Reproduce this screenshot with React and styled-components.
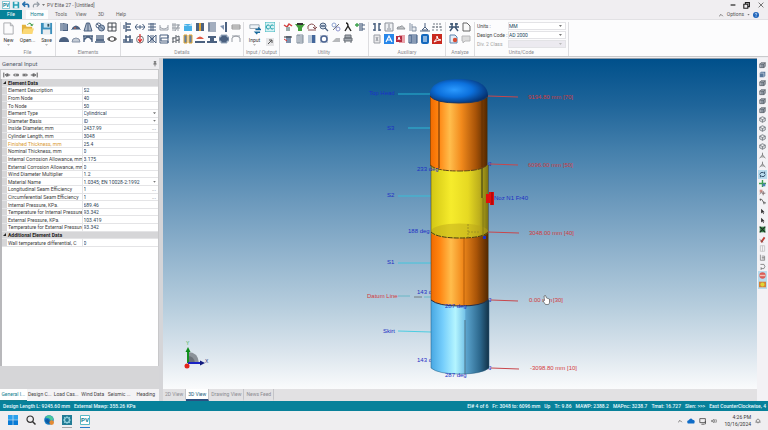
import React from "react";
import styled, { createGlobalStyle, css } from "styled-components";

const GlobalStyle = createGlobalStyle`
  * {
    box-sizing: border-box;
  }
  body {
    margin: 0;
    font-family: Roboto, "Liberation Sans", sans-serif;
    font-size: 5px;
    line-height: 7px;
    color: #333;
    background: #f0eef1;
  }
  button, input, select {
    font: inherit;
    color: inherit;
    margin: 0;
    padding: 0;
    border: 0;
    border-radius: 0;
    background: none;
  }
`;

const Page = styled.div`
  display: flex;
  flex-direction: column;
  min-height: 100vh;
`;
const TitleBar = styled.header`
  display: flex;
  align-items: center;
  gap: 2px;
  height: 10px;
  padding: 0 3px 0 2px;
  color: #555;
`;
const Title = styled.h1`
  margin: 0;
  font-size: 5px;
  font-weight: 400;
`;
const Spacer = styled.div`
  flex: 1;
`;
const WindowButtons = styled.div`
  display: flex;
  gap: 6px;
`;
const IconButton = styled.button`
  display: flex;
  align-items: center;
  justify-content: center;
  width: ${({ $size }) => $size || 8}px;
  height: ${({ $size }) => $size || 8}px;
  color: #333;
  svg {
    display: block;
    width: 100%;
    height: 100%;
  }
`;
const RibbonTabs = styled.nav`
  display: flex;
  align-items: center;
  height: 9px;
`;
const RibbonTab = styled.button`
  height: 9px;
  width: ${({ $kind }) => ($kind ? 22 : 20)}px;
  color: #666;
  ${({ $kind }) =>
    $kind === "file" &&
    css`
      margin-right: 4px;
      color: #fff;
      background: #078299;
    `}
  ${({ $kind }) =>
    $kind === "active" &&
    css`
      margin-right: 3px;
      color: #14808f;
      background: #fdfdfe;
    `}
`;
const Options = styled.div`
  display: flex;
  align-items: center;
  gap: 3px;
  padding-right: 9px;
  color: #555;
`;
const Ribbon = styled.section`
  display: flex;
  height: 38px;
  padding-top: 2px;
  background: #fcfcfd;
  border-top: 1px solid #e2e1e4;
  border-bottom: 1px solid #c9cacc;
`;
const Group = styled.div`
  display: flex;
  flex-direction: column;
  justify-content: space-between;
  padding: 0 ${({ $pad }) => $pad ?? 2}px;
  border-right: 1px solid #dddde0;
`;
const GroupLabel = styled.div`
  text-align: center;
  white-space: nowrap;
  color: #8a8a8e;
`;
const GroupBody = styled.div`
  display: flex;
  gap: 2px;
`;
const IconGrid = styled.div`
  display: grid;
  grid-template-columns: repeat(${({ $cols }) => $cols}, 10px);
  gap: 2px;
`;
const BigButton = styled.button`
  display: flex;
  flex-direction: column;
  align-items: center;
  width: 17px;
  height: 27px;
  svg {
    display: block;
    width: 13px;
    height: 13px;
    flex: none;
  }
  svg + span {
    margin-top: 2px;
  }
`;
const Caret = styled.span`
  width: 3px;
  height: 2px;
  flex: none;
  background: ${({ $light }) => ($light ? "#bbb" : "#777")};
  clip-path: polygon(0 0, 100% 0, 50% 100%);
`;
const CodeGrid = styled.div`
  display: grid;
  grid-template-columns: 31px 58px;
  row-gap: 1px;
  color: #444;
`;
const CodeLabel = styled.label`
  line-height: 8px;
  white-space: nowrap;
  opacity: ${({ $off }) => ($off ? 0.5 : 1)};
`;
const SelectBox = styled.div`
  display: flex;
  align-items: center;
  height: 8px;
  padding-right: 3px;
  background: ${({ $off }) => ($off ? "#eceaf0" : "#fff")};
  border: 1px solid #e3e3e6;
  select {
    flex: 1;
    min-width: 0;
    height: 6px;
    line-height: 6px;
    appearance: none;
    color: #17455c;
    opacity: 1;
  }
`;

const Workspace = styled.main`
  display: flex;
  flex: 1;
  min-height: 0;
  padding-top: 1px;
  background: #eeedf0;
`;
const Side = styled.aside`
  display: flex;
  flex-direction: column;
  width: 163px;
  flex: none;
  border-right: 4px solid #d5d5d8;
`;
const SideHead = styled.div`
  display: flex;
  align-items: center;
  justify-content: space-between;
  height: 11px;
  padding: 0 1px 0 2px;
`;
const SideTitle = styled.h2`
  margin: 0;
  font-size: 6px;
  font-weight: 400;
  color: #55606c;
`;
const SideTools = styled.div`
  display: flex;
  gap: 1px;
  height: 10px;
  padding: 1px 2px;
  border: 1px solid #c8c8ca;
  border-bottom: 0;
  background: #f7f6f8;
`;
const Sheet = styled.div`
  flex: 1;
  background: #fff;
  border-left: 2px solid #b8b8bb;
  border-right: 1px solid #c8c8ca;
`;
const Props = styled.table`
  width: 100%;
  height: 168px;
  table-layout: fixed;
  border-collapse: collapse;
  background: #fff;
  th, td {
    padding: 0;
    height: 7px;
    font-weight: 400;
    text-align: left;
    white-space: nowrap;
    overflow: hidden;
    line-height: 6px;
    border-bottom: 1px solid #e4e4e6;
  }
`;
const Gutter = styled.td`
  background: #d6d6d8;
`;
const SectionHead = styled.th`
  && {
    padding-left: 1px;
    font-weight: 700;
    background: #d6d6d8;
    color: #222;
  }
`;
const PropLabel = styled.th`
  color: ${({ $hot }) => ($hot ? "#d99a33" : "#3c3c3c")};
  && {
    padding-left: 1px;
    border-right: 1px solid #e4e4e6;
  }
`;
const PropValue = styled.div`
  display: flex;
  align-items: center;
  height: 6px;
  padding: 0 2px 0 1px;
  color: #2d4254;
  input, select {
    flex: 1;
    min-width: 0;
    height: 6px;
    line-height: 6px;
    appearance: none;
  }
`;
const Help = styled.div`
  height: 23px;
  background: #d6d6d8;
`;
const TabStrip = styled.div`
  display: flex;
  height: 12px;
  background: ${({ $grey }) => ($grey ? "#e2e1e3" : "#f4f3f5")};
`;
const PanelTab = styled.button`
  flex: 1;
  min-width: 0;
  white-space: nowrap;
  color: ${({ $active }) => ($active ? "#14808f" : "#444")};
  border-bottom: 1px solid ${({ $active }) => ($active ? "#14808f" : "transparent")};
  background: ${({ $active }) => ($active ? "#fff" : "transparent")};
`;
const ViewTab = styled.button`
  padding: 0 2px;
  white-space: nowrap;
  color: ${({ $active }) => ($active ? "#17607a" : "#8b8b90")};
  border-right: 1px solid #c4c4c8;
  border-bottom: 2px solid ${({ $active }) => ($active ? "#2c4f80" : "transparent")};
  background: ${({ $active }) => ($active ? "#fff" : "transparent")};
`;
const Stage = styled.section`
  display: flex;
  flex-direction: column;
  flex: 1;
  min-width: 0;
`;
const Viewport = styled.div`
  display: flex;
  flex: 1;
  min-height: 0;
  border-top: 1px solid #8c9aa8;
  background: linear-gradient(
    #00508b 0%,
    #1f659a 14%,
    #4580ac 28%,
    #6b99bc 43%,
    #91b3cd 59%,
    #b6cddd 75%,
    #dbe5ed 89%,
    #fafbfc 100%
  );
  svg {
    display: block;
    width: 100%;
    height: 100%;
    font-family: "Liberation Sans", Arial, sans-serif;
  }
`;
const ViewTools = styled.div`
  display: flex;
  flex-direction: column;
  align-items: center;
  width: 11px;
  flex: none;
  padding-top: 3px;
  background: #f3f2f5;
`;
const ViewTool = styled.button`
  width: 9px;
  height: 9px;
  flex: none;
  padding: 1px;
  background: ${({ $on }) => ($on ? "#b9dcee" : "transparent")};
  svg {
    display: block;
    width: 7px;
    height: 7px;
  }
`;
const ToolGap = styled.div`
  height: 1px;
  flex: none;
`;
const StatusBar = styled.footer`
  display: flex;
  align-items: center;
  gap: 4px;
  height: 10px;
  padding: 0 2px 0 3px;
  font-weight: 500;
  color: #e8fbff;
  background: #07819a;
  white-space: nowrap;
`;
const Taskbar = styled.nav`
  display: flex;
  align-items: center;
  gap: 8px;
  height: 19px;
  padding: 0 7px 0 8px;
  background: #efeef0;
`;
const TaskButton = styled.button`
  width: 10px;
  height: 14px;
  padding: 1px 0;
  border-bottom: 1px solid ${({ $mark }) => $mark || "transparent"};
  svg {
    display: block;
    width: 10px;
    height: 10px;
  }
`;
const Tray = styled.div`
  display: flex;
  align-items: center;
  gap: 4px;
`;
const Clock = styled.div`
  padding-left: 3px;
  text-align: right;
  color: #333;
`;

const S = "#4b6180";
const G = "#70757c";

const icons = {
  shell: <><path d="M1 1h3v8H1z" fill="#8c9bb0" /><path d="M4 1l5 1v7H4z" fill={S} /><path d="M5 2v6M7 2v6" stroke="#b9c6d8" /></>,
  head: <><path d="M1 7V6q4-5 8 0v1z" fill={S} /><path d="M3 6h2" stroke="#d86b4a" /><path d="M0 7.500h10" stroke="#9aa8ba" /></>,
  cone: <><path d="M3.500 1h3L9 9H1z" fill="#aab7c9" stroke={S} /><path d="M5 1v8" stroke={S} /></>,
  bend: <><circle cx="3.500" cy="3.500" r="2.500" fill="none" stroke={S} /><circle cx="6.500" cy="6" r="3" fill="#9fb0c6" stroke={S} /><path d="M2 2l7 6" stroke={S} /></>,
  flange: <path d="M1 1h8v8H1zM5 1v8M1 5h8" fill="none" stroke="#454a52" />,
  dome: <path d="M0 7q1-4 5-4t5 4v1H0z" fill={S} />,
  domeLt: <path d="M1 8q0-4 4-4t4 4z" fill="#c5ccd6" stroke="#8592a6" />,
  arch: <path d="M0 2h10M1 8V2M9 8V2M1 6q4-6 8 0" fill="none" stroke={S} strokeWidth="1.400" />,
  skirt: <path d="M2 1v6M4 1v6M6 1v6M8 1v6M0 8h10M1 6h8" stroke={S} strokeWidth="1.300" />,
  body: <><ellipse cx="5" cy="5" rx="3" ry="2.300" fill="none" stroke="#444" /><path d="M0 5h2M8 5h2M2 3v4M8 3v4" stroke="#444" /></>,
  nozzle: <path d="M3 0v10M3 2h5M3 5h4M3 8h5M1 3v4" stroke={S} strokeWidth="1.300" fill="none" />,
  width: <path d="M0 5h10M2.500 2L0 5l2.500 3M7.500 2L10 5 7.500 8M5 3v4" stroke={S} fill="none" />,
  beam: <path d="M1 2h8M1 5h8M1 8h8M4 1v8M6 1v8" stroke={S} />,
  saddle: <path d="M1 3v5h8V3M1 5q4 4 8 0" stroke="#999fa8" fill="none" />,
  tower: <path d="M2 1v8M4 1v8M7 2v7M1 3h8M1 6h8M4 9l4-6" stroke="#9aa0a8" />,
  liquid: <><path d="M1 2h8v7H1z" fill="#45b0e8" /><path d="M1 2l4 2 4-3v3H1z" fill="#b7dff5" /></>,
  insul: <><path d="M1 1h3v8H1zM6 1h3v8H6z" fill={S} /><path d="M4 1h2v8H4z" fill="#e3a52e" /></>,
  trays: <path d="M1 1h8M1 3h8M1 5h8M1 7h8M1 9h8M2 1v8" stroke={S} />,
  lug: <><path d="M6 0h2v10H6z" fill={S} /><path d="M5 3v5L1 4z" fill="#8094b2" /></>,
  lining: <path d="M1 3h8v4H1zM1 5h8" fill="#ddd" stroke="#999" />,
  legs: <path d="M0 8h10M2 3h6M3 1v7M7 1v7M0 6h4M6 6h4" stroke={S} strokeWidth="1.300" />,
  force: <><circle cx="5" cy="5.500" r="3.500" fill="none" stroke="#777" /><path d="M5 0v7M3 5l2 3 2-3" stroke="#d33" fill="none" strokeWidth="1.200" /></>,
  tubes: <path d="M1 1v8M9 1v8M1 1l4 4-4 4M9 1L5 5l4 4M4 1v8M6 1v8" stroke={S} fill="none" />,
  coil: <path d="M1 1h8v3H2v3h7v2H1M9 1v8M1 1v8" stroke={S} fill="none" />,
  lift: <path d="M2 9V3M5 9V1M8 9V2M1 5l7-3M1 8l8-3" stroke={G} strokeWidth="1.200" />,
  jacket: <path d="M1 1h3v8H1zM6 1h3v8H6z" fill="#5f7fa8" stroke="#e0a530" />,
  cap: <><path d="M1 5q4-5 8 0z" fill="#e05a45" /><path d="M0 7h10v2H0z" fill={S} /></>,
  cap2: <path d="M1 2h8v2H1zM3 4h4v3H3zM0 7h10v2H0z" fill={S} />,
  exp: <path d="M2 1h6v2h2v4H8v2H2V7H0V3h2z" fill={S} stroke="#9aabbf" />,
  curve: <path d="M1 8V4q4-4 8 0v4M1 2h8" stroke="#979ca4" fill="none" />,
  cc: <><path d="M0 0h10v10H0z" fill="#d5f1f3" stroke="#3db5be" /><path d="M4.500 3.500a2 2 0 100 3M8.500 3.500a2 2 0 100 3" fill="none" stroke="#179ba8" /></>,
  exportI: <><path d="M1 1h8v8H1z" fill="#e6e6e8" /><path d="M3 7l4-4M4 3h3v3" stroke="#555" fill="none" /></>,
  tee: <><path d="M1 3l3 2 2-3 3 2" stroke="#d43e3e" fill="none" strokeWidth="1.500" /><path d="M3 5h4v4H3z" fill="#99aaaa" /></>,
  funnel: <><path d="M0 2h10L7 6v3H3V6z" fill="#44a03d" /><path d="M2 1h6v2H2z" fill="#333" /></>,
  recycle: <path d="M1 7V4q4-4 7 0v2M1 8h8M6 5l2 2 2-2" stroke="#885052" fill="none" />,
  search: <><circle cx="4" cy="4" r="3" fill="#d4dfed" stroke={S} /><path d="M6 6l3 3M2 4h4" stroke={S} strokeWidth="1.300" /></>,
  nodes: <><circle cx="3" cy="3" r="2" fill="none" stroke="#8fa3d0" /><circle cx="7" cy="7" r="2" fill="none" stroke="#8f95d0" /><path d="M2 8l6-6" stroke="#777" /></>,
  lambda: <path d="M3 1q2 0 2 3l3 5M5 4L2 9" stroke="#222" fill="none" strokeWidth="1.400" />,
  addNoz: <><path d="M5 1v8M7 1v8M7 3h3M7 7h3" stroke={S} strokeWidth="1.200" /><path d="M0 3h4M2 1v4" stroke="#3aa04b" strokeWidth="1.300" /></>,
  del: <><path d="M3 2h5v7H3z" fill="#7c91ad" /><path d="M1 3h8" stroke="#333" /><path d="M1 5l3 2" stroke="#d33" /></>,
  ruler: <path d="M2 1h6v8H2zM4 1v8M5 3h3M5 5h3M5 7h3" fill="#e7ebf0" stroke="#7f8b99" />,
  panel: <><path d="M1 1h8v8H1z" fill="#bcc9d8" /><path d="M5 1h3v8H5z" fill="#44679b" /></>,
  ring: <><path d="M1 1h8v8H1z" fill="#c7cfda" /><circle cx="5" cy="5" r="3" fill="#fff" stroke="#4d6593" strokeWidth="1.500" /></>,
  slope: <path d="M1 8l4-4h4v4z" fill="#b7b9bc" />,
  printer: <path d="M2 1h6v3H2zM1 4h8v3H1zM2 7v2M8 7v2" fill="#a6abb2" stroke="#686e76" />,
  bars: <path d="M3 1v8M7 1v8M1 2h2M1 8h2M7 2h2M7 8h2" stroke={S} strokeWidth="1.500" />,
  pic: <path d="M1 1h8v8H1zM5 2v4M3 7h4" fill="#eef0f3" stroke="#8b9099" />,
  cloud: <path d="M1 7q0-3 3-2 2-3 5 2z" fill="#bfc2c6" stroke="#909499" />,
  hand: <path d="M2 1v8M4 5h4v4H4zM4 5V2" fill="#e8ebef" stroke="#8290a3" />,
  tri: <path d="M5 1v4L2 8h6L5 5M0 9h10" stroke={S} fill="none" />,
  grid: <path d="M1 2h8M1 9V4M5 9V3M9 9V4M1 5h8" stroke="#6e7680" strokeDasharray="2 1" />,
  page: <path d="M2 1h6v8H2zM4 3l2 4M4 7l2-4" fill="#e9e9eb" stroke="#9a9ea5" />,
  blueA: <><path d="M0 0h10v10H0z" fill="#2787ea" /><path d="M2 8l3-6 3 6M3.500 6h3" stroke="#fff" fill="none" strokeWidth="1.200" /></>,
  access: <><path d="M3 1h6v8H3z" fill="#e7a2aa" /><path d="M0 2h6v6H0z" fill="#b52a40" /><path d="M2 6l1-3 1 3" stroke="#fff" fill="none" /></>,
  sheet: <path d="M1 1h8v8H1zM3 3h6M3 5h6M3 7h6M3 1v8" fill="#dbe3ef" stroke="#34527c" />,
  book: <><rect x="1" y="0" width="8" height="10" rx="2" fill="#1468bd" /><path d="M3 3h4M3 5h4M3 7h4" stroke="#fff" /></>,
  pdf: <><path d="M0 0h10v10H0z" fill="#c9291f" /><path d="M2 8q4-4 3-6 0 4 4 4-4 0-7 2" stroke="#fff" fill="none" /></>,
  run: <><path d="M0 5h10M1 9l3-4M9 9L6 5M3 1v4M7 1v4M1 2h3M6 2h3" stroke="#3b5472" strokeWidth="1.400" /></>,
  doc: <path d="M2 1h4l3 3v5H2z" fill="#fafafa" stroke="#666" />,
  report: <><path d="M1 1h5l2 2v6H1z" fill="#e5edf6" stroke="#5c83ad" /><circle cx="6" cy="6" r="2.200" fill="#d94b32" /></>,
  note: <path d="M1 2h8v5H4L2 9V7H1z" fill="#ddd" stroke="#b8b8ba" />,
  cube: <><path d="M2 2h6v6H2z" fill="#8a939e" /><path d="M1 3l2-2h6v5L7 8H1zM1 3h6v5M7 3l2-2" fill="none" stroke="#4e565f" /></>,
  cubeBlue: <><path d="M1 3l2-2h6v6L7 9H1z" fill="#57779a" /><path d="M1 3h6v6" stroke="#cfd8e3" fill="none" /></>,
  iso: <path d="M5 1l4 2v4L5 9 1 7V3zM1 3l4 2 4-2M5 5v4" fill="#d3d6da" stroke="#6a7077" />,
  person: <path d="M5 1v4M5 4L1 9M5 4l4 5M3 7h4" fill="none" stroke="#777" strokeWidth="1.200" />,
  orbit: <path d="M1 5q1-4 5-3l2 2V1M9 5q-1 4-5 3L2 6v3" fill="none" stroke="#36536e" strokeWidth="1.400" />,
  pan: <><path d="M5 0v10M0 5h10" stroke="#3ca24b" strokeWidth="2" /><path d="M5 5h4v4H5z" fill="#4a80b8" /></>,
  zoomWin: <><path d="M1 1h4v4H1z" fill="#cd8f88" /><path d="M4 6h5M6 3v6M1 7l3-3" stroke="#77696a" strokeWidth="1.300" /></>,
  spline: <path d="M1 2h3l3 5h3M2 1v3M7 5v4" fill="none" stroke="#555" strokeWidth="1.200" />,
  pointer: <path d="M3 1v7l2-2 1 3 1-1-1-2h2z" fill="#333" />,
  fit: <><path d="M1 1h8v8H1z" fill="#3d8e50" /><path d="M1 1l8 8M9 1L1 9" stroke="#1c2e22" strokeWidth="1.500" /></>,
  clip: <><path d="M2 8l5-7 2 2-5 7z" fill="#c34238" /><path d="M1 5l5 4" stroke="#555" /></>,
  faint: <path d="M2 1h6v8H2zM5 1v8" fill="none" stroke="#bbb" />,
  lines: <path d="M2 1v8h6V3H4M4 5h4M4 7h4" fill="none" stroke="#777" />,
  hook: <path d="M2 2h5q3 3 0 6H3M3 6v4" fill="none" stroke="#666" />,
  redStop: <><circle cx="5" cy="5" r="4.500" fill="#da5d57" /><path d="M1 5h8" stroke="#f2c3b6" strokeWidth="2" /></>,
  sun: <><path d="M0 1h10v8H0z" fill="#d68237" /><circle cx="5" cy="5" r="3" fill="#dfd535" /></>,
  first: <path d="M1 2v6M3 5h6M5 3L3 5l2 2M6 3v4" stroke="#333" fill="none" />,
  prev: <path d="M2 5h6M4 3L2 5l2 2M5 4h3v2H5" stroke="#555" fill="none" />,
  next: <path d="M2 5h6M6 3l2 2-2 2M2 4h3v2H2" stroke="#555" fill="none" />,
  last: <path d="M9 2v6M1 5h6M5 3l2 2-2 2M4 3v4" stroke="#333" fill="none" />,
  pin: <path d="M3 1h4M4 1v4M6 1v4M2 5h6M5 5v4" stroke="#444" fill="none" />,
  undo: <path d="M1 4h6q2 1 1 4M4 1L1 4l3 3" stroke="#2871ad" fill="none" strokeWidth="2" />,
  redo: <path d="M9 4H3q-2 1-1 4M6 1l3 3-3 3" stroke="#929aa3" fill="none" strokeWidth="1.500" />,
  save: <><path d="M1 1h7l1 1v7H1z" fill="#279fb5" /><path d="M3 1h4v3H3zM3 6h4v3H3z" fill="#dff3f7" /></>,
  min: <path d="M2 5h6" stroke="#222" strokeWidth="1.500" />,
  restore: <path d="M1 4h5v5H1zM3 4V2h5v5H6" fill="none" stroke="#222" strokeWidth="1.400" />,
  close: <path d="M2 2l6 6M8 2L2 8" stroke="#555" />,
  up: <path d="M2 7l3-3 3 3" stroke="#555" fill="none" strokeWidth="1.300" />,
  win: <><path d="M0 0h4.700v4.700H0zM5.300 0H10v4.700H5.300z" fill="#2ba0ed" /><path d="M0 5.300h4.700V10H0zM5.300 5.300H10V10H5.300z" fill="#087bd5" /></>,
  find: <><circle cx="4.200" cy="4.200" r="3.200" fill="none" stroke="#333" strokeWidth="1.200" /><path d="M6.500 6.500L9.500 9.500" stroke="#333" strokeWidth="1.500" /></>,
  edge: <><circle cx="5" cy="5" r="4.800" fill="#1680c7" /><path d="M1 3q3-5 8-.5Q10 5 7 6q-2-4-6-3" fill="#4bc99b" /><path d="M1 6q3 4 6 2L4 4Q1 4 1 6" fill="#0b5ba5" /><circle cx="7.700" cy="7.600" r="2.300" fill="#e58b34" /></>,
  gear: <><path d="M0 0h10v10H0z" fill="#237c95" /><circle cx="5" cy="5" r="2.500" fill="none" stroke="#a2dae5" strokeWidth="1.200" /><path d="M5 1v2M5 7v2M1 5h2M7 5h2M2 2l1 1M8 2L7 3M2 8l1-1M8 8L7 7" stroke="#86cbd9" /></>,
  pv: <><path d="M.5.5h9v9h-9z" fill="#fff" stroke="#5bb9c6" /><text x="5" y="7" fontSize="6" fontWeight="700" textAnchor="middle" fill="#087e94">PV</text></>,
  onedrive: <path d="M1 8q-2-3 1-4 3-4 5-.5 4 .500 2 4.500z" fill="#0f6cc7" />,
  net: <path d="M1 2h7v5H1zM3 9h4M8 5v4" fill="none" stroke="#444" />,
  sound: <path d="M1 4h2l2-2v6L3 6H1zM6 4q1 1 0 2M8 2q2 3 0 6" fill="none" stroke="#444" />,
  bell: <path d="M1 7l1-1V4q3-5 6 0v2l1 1zM4 8h2" fill="none" stroke="#444" />,
};

const Icon = ({ name }) => (
  <svg viewBox="0 0 10 10" aria-hidden="true">
    {icons[name]}
  </svg>
);

const elements = ["shell", "head", "cone", "bend", "flange", "dome", "domeLt", "arch", "skirt", "body"];
const details = [
  "nozzle", "width", "beam", "saddle", "tower", "liquid", "insul", "trays", "lug", "lining",
  "legs", "force", "tubes", "coil", "lift", "jacket", "cap", "cap2", "exp", "curve",
];
const utility = [
  "tee", "funnel", "recycle", "search", "nodes", "lambda", "addNoz",
  "del", "ruler", "panel", "ring", "slope", "printer",
];
const auxiliary = [
  "bars", "pic", "cloud", "hand", "tri", "grid",
  "page", "blueA", "access", "sheet", "book", "pdf",
];
const analyze = ["run", "doc", "report", "note"];

const viewTools = [
  "cube", "cubeBlue", "cube", "cube", "cube", "cube", "iso", "iso", "iso", "iso", "person", "person", "-",
  "orbit", "pan", "zoomWin", "spline", "-",
  "pointer", "pointer", "fit", "-",
  "clip", "faint", "lines", "hook", "redStop", "sun",
];

const elementData = [
  { label: "Element Description", value: "S2" },
  { label: "From Node", value: "40" },
  { label: "To Node", value: "50" },
  { label: "Element Type", value: "Cylindrical", select: true },
  { label: "Diameter Basis", value: "ID", select: true },
  { label: "Inside Diameter, mm", value: "2437.99", more: true },
  { label: "Cylinder Length, mm", value: "3048" },
  { label: "Finished Thickness, mm", value: "25.4", hot: true },
  { label: "Nominal Thickness, mm", value: "0" },
  { label: "Internal Corrosion Allowance, mm", value: "3.175" },
  { label: "External Corrosion Allowance, mm", value: "0" },
  { label: "Wind Diameter Multiplier", value: "1.2" },
  { label: "Material Name", value: "1.0345; EN 10028-2:1992", select: true },
  { label: "Longitudinal Seam Efficiency", value: "1", more: true },
  { label: "Circumferential Seam Efficiency", value: "1", more: true },
  { label: "Internal Pressure, KPa.", value: "689.46" },
  { label: "Temperature for Internal Pressure,", value: "93.342" },
  { label: "External Pressure, KPa.", value: "103.419" },
  { label: "Temperature for External Pressure,", value: "93.342" },
];
const additionalData = [{ label: "Wall temperature differential, C", value: "0" }];

const panelTabs = ["General I...", "Design C...", "Load Cas...", "Wind Data", "Seismic ...", "Heading"];
const viewTabs = ["2D View", "3D View", "Drawing View", "News Feed"];
const status = [
  "El# 4 of 6", "Fr: 3048 to: 6096 mm", "Up", "Tr: 9.86", "MAWP: 2388.2",
  "MAPnc: 3238.7", "Tmat: 16.727", "Slen: >>>", "East CounterClockwise, 4",
];
const taskbar = [
  { name: "win" },
  { name: "find" },
  { name: "edge" },
  { name: "gear", mark: "#a5a5a8" },
  { name: "pv", mark: "#2b7cc9" },
];

function IconGroup({ label, names, cols, pad }) {
  return (
    <Group $pad={pad}>
      <IconGrid $cols={cols}>
        {names.map((name) => (
          <IconButton key={name} $size={10} aria-label={name}>
            <Icon name={name} />
          </IconButton>
        ))}
      </IconGrid>
      <GroupLabel>{label}</GroupLabel>
    </Group>
  );
}

function PropRows({ title, rows }) {
  return (
    <>
      <tr>
        <Gutter>
          <svg width="5" height="5" viewBox="0 0 5 5" display="block">
            <path d="M4 1v3H1z" fill="#222" />
          </svg>
        </Gutter>
        <SectionHead colSpan={2}>{title}</SectionHead>
      </tr>
      {rows.map((row, i) => {
        const id = `${title}-${i}`.replace(/ /g, "-");
        return (
          <tr key={row.label}>
            <Gutter />
            <PropLabel $hot={row.hot}>
              <label htmlFor={id}>{row.label}</label>
            </PropLabel>
            <td>
              <PropValue>
                {row.select ? (
                  <select id={id}>
                    <option>{row.value}</option>
                  </select>
                ) : (
                  <input id={id} defaultValue={row.value} />
                )}
                {row.select && <Caret />}
                {row.more && <span>...</span>}
              </PropValue>
            </td>
          </tr>
        );
      })}
    </>
  );
}

function Vessel() {
  return (
    <svg viewBox="163 60 594 328" fontSize="6">
      <defs>
        <linearGradient id="orange">
          <stop offset="0" stopColor="#f06a00" />
          <stop offset="0.150" stopColor="#ff8410" />
          <stop offset="0.350" stopColor="#ffbd4c" />
          <stop offset="0.550" stopColor="#f28a1c" />
          <stop offset="0.800" stopColor="#a95408" />
          <stop offset="1" stopColor="#542900" />
        </linearGradient>
        <linearGradient id="yellow">
          <stop offset="0" stopColor="#d2c614" />
          <stop offset="0.350" stopColor="#f6ec2c" />
          <stop offset="0.650" stopColor="#e6d922" />
          <stop offset="0.850" stopColor="#bdaf1c" />
          <stop offset="1" stopColor="#7d7413" />
        </linearGradient>
        <linearGradient id="sky">
          <stop offset="0" stopColor="#48a7e2" />
          <stop offset="0.200" stopColor="#74cdfb" />
          <stop offset="0.420" stopColor="#b4f5ff" />
          <stop offset="0.580" stopColor="#78c5e9" />
          <stop offset="0.600" stopColor="#5ca5cf" />
          <stop offset="0.850" stopColor="#2b668b" />
          <stop offset="1" stopColor="#123248" />
        </linearGradient>
        <radialGradient id="cap" cx="0.420" cy="0.450" r="0.620">
          <stop offset="0" stopColor="#2b9aff" />
          <stop offset="0.500" stopColor="#0c70dc" />
          <stop offset="1" stopColor="#052f6c" />
        </radialGradient>
      </defs>

      <g fill="#1d2fc4">
        <text x="369" y="95">Top Head</text>
        <text x="387" y="130">S3</text>
        <text x="387" y="197">S2</text>
        <text x="387" y="264">S1</text>
        <text x="383" y="333">Skirt</text>
        <text x="408" y="233">188 deg</text>
        <text x="417" y="294">143 deg</text>
        <text x="417" y="362">143 deg</text>
        <text x="488" y="165">g</text>
        <text x="488" y="301">g</text>
        <text x="488" y="369">g</text>
      </g>
      <path d="M398 94h33M408 128h23M398 196h33M398 263h33M398 331l33 1" stroke="#2cc9df" strokeWidth="0.800" />
      <path d="M398 296h12M424 297h7" stroke="#59b3c0" strokeWidth="0.800" />
      <path d="M414 297h8" stroke="#666" strokeWidth="0.800" />

      <path d="M431 300v68q7 6 29 6t29-6v-68z" fill="url(#sky)" stroke="#245a7c" strokeWidth="0.500" />
      <path d="M465 320v54" stroke="#4c7083" />
      <path d="M431 232v68q7 6 29 6t28-6v-68z" fill="url(#orange)" />
      <path d="M431 300q7 6 29 6t28-6" fill="none" stroke="#24304a" />
      <path d="M464 238v67" stroke="#a34e00" strokeWidth="0.700" />
      <path d="M431 165v68q6 5 29 5t28-5v-68z" fill="url(#yellow)" />
      <ellipse cx="459.500" cy="231" rx="28.500" ry="7.500" fill="#b8a219" fillOpacity="0.450" />
      <path d="M431 232q6 6 29 6t28-6" fill="none" stroke="#4a3c12" strokeDasharray="5 1" />
      <path d="M468 224v13M468 232h12" stroke="#a09222" strokeDasharray="2 1" />
      <path d="M482 165v33" stroke="#333414" />
      <path d="M483 198v39" stroke="#777016" strokeWidth="0.700" />
      <path d="M430 95v70q6 6 29 6t28-6V95z" fill="url(#orange)" />
      <path d="M430 165q6 6 29 6t28-6" fill="none" stroke="#5e4719" strokeDasharray="6 1" />
      <path d="M439 100v68" stroke="#5a2b05" />
      <path d="M482 99v68" stroke="#5a2b05" strokeWidth="0.700" />
      <path d="M430 96C429 85 440 79 459 79s29 6 29 17q-5 7-29 7t-29-7z" fill="url(#cap)" />
      <path d="M430 96q5 7 29 7t29-7" fill="none" stroke="#1b3864" />
      <path d="M430.500 96v69M487.500 96v69M431 165v135M488.500 165v135" stroke="#443416" strokeWidth="0.500" />

      <path d="M486 194h3v-2h5v13h-4v-2h-4z" fill="#e30d0d" />
      <path d="M492 192v13" stroke="#8e0606" />

      <g fill="#1d2fc4">
        <text x="494" y="200">Noz N1 Fr40</text>
        <text x="417" y="171">233 deg</text>
        <text x="445" y="308">287 deg</text>
        <text x="445" y="377">287 deg</text>
        <path d="M483 236h3v3h-3z" />
      </g>
      <path d="M488 96l30 1M490 164l28 1M488 232l31 1M491 300l27 1M491 368l28 1" stroke="#c8474c" />
      <g fill="#d33a3d">
        <text x="528" y="99">9194.80 mm [70]</text>
        <text x="528" y="167">6096.00 mm [50]</text>
        <text x="529" y="235">3048.00 mm [40]</text>
        <text x="529" y="302">0.00 mm</text>
        <text x="553" y="302">[30]</text>
        <text x="530" y="370">-3098.80 mm [10]</text>
        <text x="367" y="298">Datum Line</text>
      </g>
      <path d="M544 296l1.500-.5 1 2.500 3 1v4l-1 1.500h-3L543 301l1.500-.5z" fill="#fff" stroke="#444" strokeWidth="0.600" />

      <path d="M188 363v-11q10 0 11 11z" fill="#8b9299" />
      <path d="M188 363v-7q6 0 7 7z" fill="#6b7178" />
      <path d="M188 363v-12" stroke="#13911f" strokeWidth="2" />
      <path d="M185.500 352l2.500-5 2.500 5z" fill="#0b8c17" />
      <path d="M188 363h12" stroke="#1a24c4" strokeWidth="2" />
      <path d="M200 360.500l5 2.500-5 2.500z" fill="#101a7e" />
      <circle cx="187" cy="366" r="2.500" fill="#e3261b" />
      <text x="186" y="345" fontSize="5" fill="#39b34a">Y</text>
      <text x="205" y="363" fontSize="5" fill="#2c357f">X</text>
    </svg>
  );
}

function App() {
  return (
    <Page>
      <GlobalStyle />
      <TitleBar>
        <IconButton aria-label="PV Elite"><Icon name="pv" /></IconButton>
        <IconButton aria-label="Save"><Icon name="save" /></IconButton>
        <IconButton aria-label="Undo"><Icon name="undo" /></IconButton>
        <IconButton aria-label="Redo"><Icon name="redo" /></IconButton>
        <Caret />
        <Title>PV Elite 27 - [Untitled]</Title>
        <Spacer />
        <WindowButtons>
          <IconButton aria-label="Minimize"><Icon name="min" /></IconButton>
          <IconButton aria-label="Restore"><Icon name="restore" /></IconButton>
          <IconButton aria-label="Close"><Icon name="close" /></IconButton>
        </WindowButtons>
      </TitleBar>
      <RibbonTabs>
        <RibbonTab $kind="file">File</RibbonTab>
        <RibbonTab $kind="active">Home</RibbonTab>
        {["Tools", "View", "3D", "Help"].map((tab) => (
          <RibbonTab key={tab}>{tab}</RibbonTab>
        ))}
        <Spacer />
        <Options>
          <IconButton $size={6} aria-label="Collapse"><Icon name="up" /></IconButton>
          <span>Options</span>
          <Caret />
          <IconButton $size={6} aria-label="Help">
            <svg viewBox="0 0 10 10">
              <circle cx="5" cy="5" r="5" fill="#1b62ba" />
              <path d="M3.500 4q0-2 1.500-2t1.500 1.500Q6.500 4.500 5 5v1M5 7v1.500" stroke="#fff" fill="none" />
            </svg>
          </IconButton>
        </Options>
      </RibbonTabs>
      <Ribbon>
        <Group $pad={0}>
          <GroupBody>
            <BigButton>
              <svg viewBox="0 0 14 14"><path d="M2 1h7l3 3v9H2z" fill="#fbfbfc" stroke="#a6a9ad" /><path d="M9 1v3h3" fill="none" stroke="#a6a9ad" /></svg>
              <span>New</span>
              <Caret $light />
            </BigButton>
            <BigButton>
              <svg viewBox="0 0 14 14"><path d="M1 3h4l1 2h6v8H1z" fill="#e3b33e" /><path d="M1 13l2-6h11l-2 6z" fill="#fbd875" /><path d="M7 3q3-4 5 1M10 3l2 1 1-2" fill="none" stroke="#3f9b47" /></svg>
              <span>Open...</span>
            </BigButton>
            <BigButton>
              <svg viewBox="0 0 14 14"><path d="M1 1h12v12H1z" fill="#3b8fbc" /><path d="M4 1h7v5H4z" fill="#cbe5f2" /><path d="M8 2h2v3H8z" fill="#34515f" /><path d="M3 8h8v5H3z" fill="#e9ecef" /></svg>
              <span>Save</span>
              <Caret $light />
            </BigButton>
          </GroupBody>
          <GroupLabel>File</GroupLabel>
        </Group>
        <IconGroup label="Elements" names={elements} cols={5} pad={3} />
        <IconGroup label="Details" names={details} cols={10} />
        <Group>
          <GroupBody>
            <BigButton>
              <svg viewBox="0 0 14 14"><path d="M2 3h10v4H2z" fill="#eef3f7" stroke="#9ba7b2" /><path d="M8 8h5l-2-2M13 11H8l2 2" fill="none" stroke="#17699c" strokeWidth="1.500" /></svg>
              <span>Input</span>
              <Caret $light />
            </BigButton>
            <IconGrid $cols={1}>
              <IconButton $size={10} aria-label="CodeCalc"><Icon name="cc" /></IconButton>
              <IconButton $size={10} aria-label="Export"><Icon name="exportI" /></IconButton>
            </IconGrid>
          </GroupBody>
          <GroupLabel>Input / Output</GroupLabel>
        </Group>
        <IconGroup label="Utility" names={utility} cols={7} pad={3} />
        <IconGroup label="Auxiliary" names={auxiliary} cols={6} pad={3} />
        <IconGroup label="Analyze" names={analyze} cols={2} pad={3} />
        <Group>
          <CodeGrid>
            <CodeLabel htmlFor="units">Units :</CodeLabel>
            <SelectBox>
              <select id="units"><option>MM</option></select>
              <Caret />
            </SelectBox>
            <CodeLabel htmlFor="code">Design Code :</CodeLabel>
            <SelectBox>
              <select id="code"><option>AD 2000</option></select>
              <Caret />
            </SelectBox>
            <CodeLabel htmlFor="div" $off>Div. 2 Class</CodeLabel>
            <SelectBox $off>
              <select id="div" disabled><option></option></select>
              <Caret $light />
            </SelectBox>
          </CodeGrid>
          <GroupLabel>Units/Code</GroupLabel>
        </Group>
      </Ribbon>

      <Workspace>
        <Side>
          <SideHead>
            <SideTitle>General Input</SideTitle>
            <IconButton $size={6} aria-label="Pin"><Icon name="pin" /></IconButton>
          </SideHead>
          <SideTools>
            {["first", "prev", "next", "last"].map((name) => (
              <IconButton key={name} aria-label={name}><Icon name={name} /></IconButton>
            ))}
          </SideTools>
          <Sheet>
            <Props>
              <colgroup>
                <col width="5" />
                <col width="75" />
                <col />
              </colgroup>
              <tbody>
                <PropRows title="Element Data" rows={elementData} />
                <PropRows title="Additional Element Data" rows={additionalData} />
              </tbody>
            </Props>
          </Sheet>
          <Help />
          <TabStrip>
            {panelTabs.map((tab, i) => (
              <PanelTab key={tab} $active={i === 0}>{tab}</PanelTab>
            ))}
          </TabStrip>
        </Side>
        <Stage>
          <Viewport>
            <Vessel />
          </Viewport>
          <TabStrip $grey>
            {viewTabs.map((tab, i) => (
              <ViewTab key={tab} $active={i === 1}>{tab}</ViewTab>
            ))}
          </TabStrip>
        </Stage>
        <ViewTools>
          {viewTools.map((name, i) =>
            name === "-" ? (
              <ToolGap key={i} />
            ) : (
              <ViewTool key={i} $on={["orbit", "redStop", "sun"].includes(name)} aria-label={name}>
                <Icon name={name} />
              </ViewTool>
            )
          )}
        </ViewTools>
      </Workspace>

      <StatusBar>
        <span>Design Length L: 9245.60 mm</span>
        <span>External Mawp: 355.26 KPa</span>
        <Spacer />
        {status.map((item) => (
          <span key={item}>{item}</span>
        ))}
      </StatusBar>
      <Taskbar>
        {taskbar.map(({ name, mark }) => (
          <TaskButton key={name} $mark={mark} aria-label={name}>
            <Icon name={name} />
          </TaskButton>
        ))}
        <Spacer />
        <Tray>
          <IconButton $size={6} aria-label="Hidden icons"><Icon name="up" /></IconButton>
          <IconButton aria-label="OneDrive"><Icon name="onedrive" /></IconButton>
          <IconButton aria-label="Network"><Icon name="net" /></IconButton>
          <IconButton $size={6} aria-label="Volume"><Icon name="sound" /></IconButton>
          <Clock>
            <div>4:26 PM</div>
            <div>10/16/2024</div>
          </Clock>
          <IconButton $size={6} aria-label="Notifications"><Icon name="bell" /></IconButton>
        </Tray>
      </Taskbar>
    </Page>
  );
}

export default App;
